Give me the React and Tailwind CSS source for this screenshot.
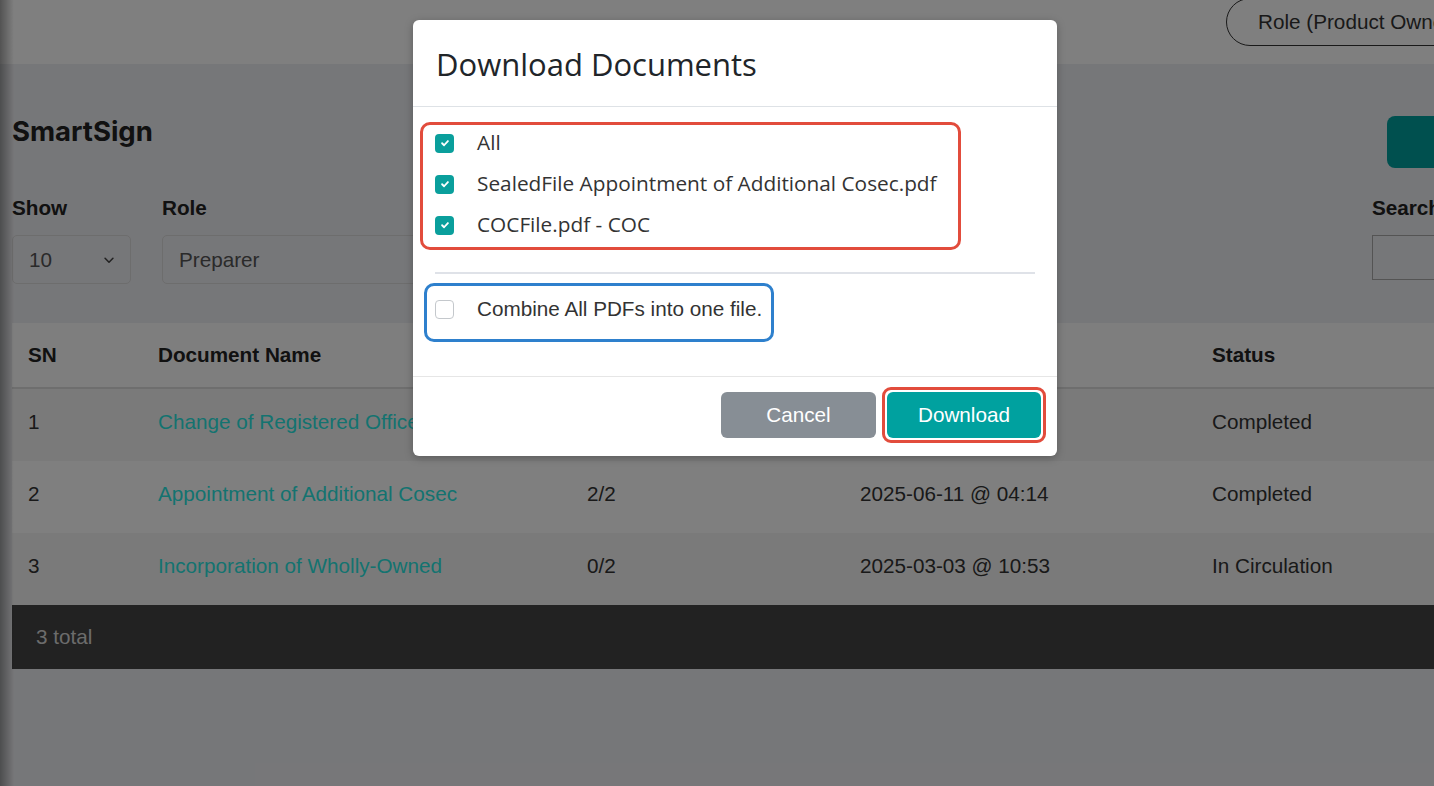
const ROWS = [
    { sn: 1, name: 'Change of Registered Office', signed: '2/2', date: '2025-06-11 @ 04:20', status: 'Completed' },
    { sn: 2, name: 'Appointment of Additional Cosec', signed: '2/2', date: '2025-06-11 @ 04:14', status: 'Completed' },
    { sn: 3, name: 'Incorporation of Wholly-Owned', signed: '0/2', date: '2025-03-03 @ 10:53', status: 'In Circulation' },
]

const FILES = ['All', 'SealedFile Appointment of Additional Cosec.pdf', 'COCFile.pdf - COC']

const COLS = 'grid grid-cols-[130px_429px_273px_352px_1fr]'

function CheckBox({ checked }) {
    if (!checked) {
        return <span className="h-[19px] w-[19px] shrink-0 rounded-[4px] border border-[#c4c8cc] bg-white" />
    }
    return (
        <span className="flex h-[19px] w-[19px] shrink-0 items-center justify-center rounded-[4px] bg-[#0a9f9c]">
            <svg className="h-[10px] w-[10px]" viewBox="0 0 12 12" fill="none" stroke="white" strokeWidth={2.2} strokeLinecap="round" strokeLinejoin="round">
                <path d="M2.5 6.3l2.4 2.4 4.6-5" />
            </svg>
        </span>
    )
}

function Page() {
    return (
        <div className="relative h-[786px] w-[1434px] overflow-hidden bg-[#edeef2] font-['Liberation_Sans',Arial,sans-serif] text-[20.7px] text-[#333]">
            <header className="flex h-[64px] justify-end overflow-hidden bg-white">
                <div className="-mr-[62px] -mt-[2px] flex h-[48px] w-[270px] shrink-0 items-center rounded-full border border-[#333] pl-[31px]">
                    Role (Product Owner)
                </div>
            </header>

            <main className="w-[1560px] pl-[12px]">
                <div className="flex items-start justify-between pt-[52px] pr-[12px]">
                    <h1 className="font-['Inter',sans-serif] text-[27.5px] leading-[30px] font-bold text-[#222]">SmartSign</h1>
                    <button className="h-[52px] w-[161px] rounded-lg bg-[#00a09e]" />
                </div>

                <div className="mt-[28px] flex items-start pr-[12px]">
                    <div className="w-[119px]">
                        <p className="leading-[24px] font-bold text-[#222]">Show</p>
                        <div className="mt-[15px] flex h-[49px] items-center justify-between rounded-[5px] border border-[#dadada] pl-[16px] pr-[14px] text-[#555]">
                            10
                            <svg className="h-[14px] w-[14px]" viewBox="0 0 16 16" fill="none" stroke="#444" strokeWidth={1.8} strokeLinecap="round" strokeLinejoin="round">
                                <path d="M3.5 6l4.5 4.5L12.5 6" />
                            </svg>
                        </div>
                    </div>
                    <div className="ml-[31px] w-[380px]">
                        <p className="leading-[24px] font-bold text-[#222]">Role</p>
                        <div className="mt-[15px] flex h-[49px] items-center rounded-[5px] border border-[#dadada] px-[16px] text-[#555]">
                            Preparer
                        </div>
                    </div>
                    <div className="ml-auto w-[176px]">
                        <p className="leading-[24px] font-bold text-[#222]">Search</p>
                        <div className="mt-[15px] h-[45px] border border-[#a8a8a8]" />
                    </div>
                </div>

                <div className="mt-[39px]">
                    <div className={`${COLS} h-[66px] items-center border-b-2 border-[#dcdcdc] bg-[#fdfdfd] font-bold text-[#222]`}>
                        <span className="pl-[16px]">SN</span>
                        <span className="pl-[16px]">Document Name</span>
                        <span className="pl-[16px]">Signatures</span>
                        <span className="pl-[16px]">Last Updated</span>
                        <span className="pl-[16px]">Status</span>
                    </div>
                    {ROWS.map((r, i) => (
                        <div key={r.sn} className={`${COLS} h-[72px] items-center pb-[6px] ${i % 2 === 0 ? 'bg-[#f5f5f5]' : 'bg-white'}`}>
                            <span className="pl-[16px]">{r.sn}</span>
                            <span className="pl-[16px] text-[#28e6e0]">{r.name}</span>
                            <span className="pl-[16px]">{r.signed}</span>
                            <span className="pl-[16px]">{r.date}</span>
                            <span className="pl-[16px]">{r.status}</span>
                        </div>
                    ))}
                    <div className="flex h-[64px] items-center bg-[#444] pl-[24px] text-[#d8d8d8]">3 total</div>
                </div>
            </main>

            <div className="absolute inset-y-0 left-0 w-[14px] bg-gradient-to-r from-black/35 to-transparent" />
        </div>
    )
}

function DownloadModal() {
    return (
        <div className="w-[644px] rounded-[6px] bg-white shadow-[0_2px_8px_rgba(0,0,0,0.25)]">
            <div className="flex h-[87px] items-center border-b border-[#dee2e6] px-[23px] pt-[3px]">
                <h2 className="font-['Open_Sans',sans-serif] text-[31px] text-[#212529]">Download Documents</h2>
            </div>

            <div className="px-[22px] pt-[15px] pb-[34px]">
                <div className="-ml-[15px] flex w-[541px] flex-col gap-[17px] rounded-[10px] border-[3px] border-[#e24c3c] pt-[6px] pb-[10px] pl-[12px]">
                    {FILES.map((f) => (
                        <label key={f} className="flex h-[24px] items-center gap-[23px] font-['Open_Sans',sans-serif] text-[20.8px] text-[#333]">
                            <CheckBox checked />
                            {f}
                        </label>
                    ))}
                </div>

                <div className="mt-[22px] h-[2px] bg-[#dfe2e8]" />

                <div className="-ml-[11px] mt-[9px] w-[350px] rounded-[10px] border-[3px] border-[#2e80cd] pt-[11px] pb-[18px] pl-[8px]">
                    <label className="flex h-[24px] items-center gap-[23px] text-[20.7px] text-[#333]">
                        <CheckBox checked={false} />
                        Combine All PDFs into one file.
                    </label>
                </div>
            </div>

            <div className="flex items-center justify-end gap-[6px] border-t border-[#e6e6e6] pt-[10px] pr-[11px] pb-[13px] text-[20.7px] text-white">
                <button className="h-[46px] w-[155px] rounded-[6px] bg-[#878e95]">Cancel</button>
                <div className="rounded-[9px] border-[3px] border-[#e24c3c] bg-white p-[2px]">
                    <button className="block h-[46px] w-[154px] rounded-[6px] bg-[#00a19f]">Download</button>
                </div>
            </div>
        </div>
    )
}

export default function App() {
    return (
        <div className="relative h-[786px] w-[1434px] overflow-hidden font-['Liberation_Sans',Arial,sans-serif]">
            <Page />
            <div className="absolute inset-0 bg-black/50 pl-[413px] pt-[20px]">
                <DownloadModal />
            </div>
        </div>
    )
}
